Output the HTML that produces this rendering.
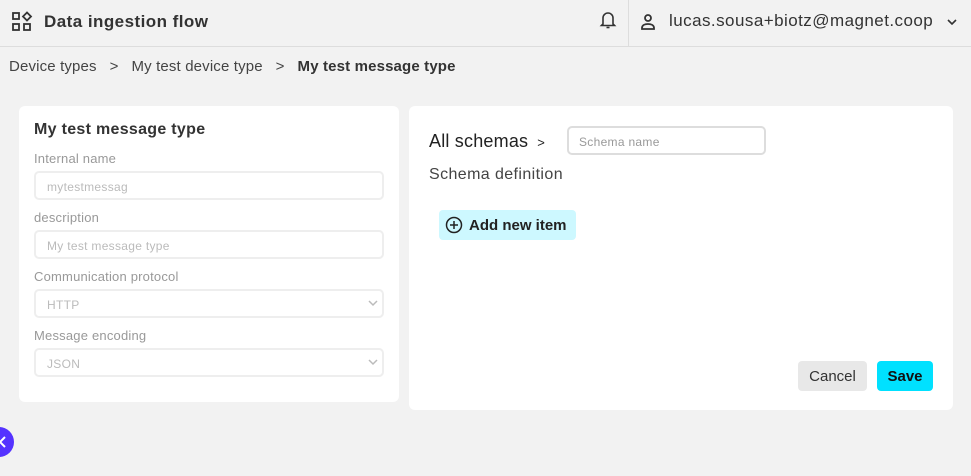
<!DOCTYPE html>
<html><head><style>
*{box-sizing:border-box;margin:0;padding:0}
body{width:971px;height:476px;background:#f2f2f2;font-family:"Liberation Sans",sans-serif;color:#333;position:relative;overflow:hidden}
.hdr{position:absolute;left:0;top:0;width:971px;height:47px;border-bottom:1px solid #ddd}
.abs{position:absolute}
.card{position:absolute;background:#fff;border-radius:6px}
.lbl{position:absolute;left:15px;font-size:13px;color:#999;letter-spacing:0.2px}
.inp{position:absolute;left:15px;width:350px;height:29px;border:2px solid #eee;border-radius:5px;font-size:12px;color:#bbb;padding:7px 0 0 11px;letter-spacing:0.3px}
.chev{position:absolute;right:3px;top:7px}
</style></head><body>
<div class="hdr">
 <svg class="abs" style="left:11px;top:11px" width="22" height="22" viewBox="0 0 22 22" fill="none" stroke="#333" stroke-width="1.8"><rect x="2" y="2" width="6" height="6"/><rect x="2" y="13" width="6" height="6"/><rect x="13" y="13" width="6" height="6"/><path d="M16 1.5l4 4-4 4-4-4z"/></svg>
 <div class="abs" style="left:44px;top:12px;font-size:17px;font-weight:bold;color:#333;letter-spacing:0.45px">Data ingestion flow</div>
 <svg class="abs" style="left:599px;top:10px" width="18" height="20" viewBox="0 0 18 20" fill="none" stroke="#333" stroke-width="1.6"><path d="M4 14V8a5 5 0 0110 0v6l1.5 1.5h-13z"/><path d="M7.5 17.5h3"/></svg>
 <div class="abs" style="left:628px;top:0;width:1px;height:46px;background:#ddd"></div>
 <svg class="abs" style="left:640px;top:13px" width="16" height="18" viewBox="0 0 16 18" fill="none" stroke="#333" stroke-width="1.8"><circle cx="8" cy="5" r="3"/><path d="M2 15c0-3 3-4 6-4s6 1 6 4v1H2z"/></svg>
 <div class="abs" style="left:669px;top:11px;font-size:17px;color:#333;letter-spacing:0.45px">lucas.sousa+biotz@magnet.coop</div>
 <svg class="abs" style="left:946px;top:18px" width="12" height="8" viewBox="0 0 12 8" fill="none" stroke="#333" stroke-width="1.6"><path d="M2 2l4 4 4-4"/></svg>
</div>
<div class="abs" style="left:9px;top:58px;font-size:15px;color:#444;letter-spacing:0.15px">Device types &nbsp;&nbsp;&gt;&nbsp;&nbsp; My test device type &nbsp;&nbsp;&gt;&nbsp;&nbsp; <b style="color:#333">My test message type</b></div>

<div class="card" style="left:19px;top:106px;width:380px;height:296px">
 <div class="abs" style="left:15px;top:15px;font-size:16px;font-weight:bold;color:#333;letter-spacing:0.3px">My test message type</div>
 <div class="lbl" style="top:45px">Internal name</div>
 <div class="inp" style="top:65px">mytestmessag</div>
 <div class="lbl" style="top:104px">description</div>
 <div class="inp" style="top:124px">My test message type</div>
 <div class="lbl" style="top:163px">Communication protocol</div>
 <div class="inp" style="top:183px">HTTP<svg class="chev" width="12" height="10" viewBox="0 0 12 10" fill="none" stroke="#bbb" stroke-width="1.5"><path d="M2 3l4 4 4-4"/></svg></div>
 <div class="lbl" style="top:222px">Message encoding</div>
 <div class="inp" style="top:242px">JSON<svg class="chev" width="12" height="10" viewBox="0 0 12 10" fill="none" stroke="#bbb" stroke-width="1.5"><path d="M2 3l4 4 4-4"/></svg></div>
</div>

<div class="card" style="left:409px;top:106px;width:544px;height:304px">
 <div class="abs" style="left:20px;top:25px;font-size:18px;color:#222;letter-spacing:0.2px">All schemas <span style="font-size:13px">&nbsp;&gt;</span></div>
 <div class="abs" style="left:158px;top:20px;width:199px;height:29px;border:2px solid #ddd;border-radius:5px;font-size:12px;color:#999;padding:7px 0 0 10px;letter-spacing:0.3px">Schema name</div>
 <div class="abs" style="left:20px;top:60px;font-size:16px;color:#444;letter-spacing:0.4px">Schema definition</div>
 <div class="abs" style="left:30px;top:104px;width:137px;height:30px;background:#cdf8ff;border-radius:4px;font-size:15px;font-weight:bold;color:#222;padding:7px 0 0 30px">Add new item
  <svg class="abs" style="left:6px;top:6px" width="18" height="18" viewBox="0 0 18 18" fill="none" stroke="#222" stroke-width="1.5"><circle cx="9" cy="9" r="7.5"/><path d="M9 5v8M5 9h8"/></svg></div>
 <div class="abs" style="left:389px;top:255px;width:69px;height:30px;background:#e8e8e8;border-radius:4px;font-size:15px;color:#333;text-align:center;line-height:31px">Cancel</div>
 <div class="abs" style="left:468px;top:255px;width:56px;height:30px;background:#00e1ff;border-radius:4px;font-size:15px;font-weight:bold;color:#111;text-align:center;line-height:31px">Save</div>
</div>

<div class="abs" style="left:-16px;top:427px;width:30px;height:30px;border-radius:50%;background:#5533ff"></div>
<svg class="abs" style="left:0;top:435px" width="8" height="14" viewBox="0 0 8 14" fill="none" stroke="#fff" stroke-width="2"><path d="M5 2L0 7l5 5"/></svg>
</body></html>
